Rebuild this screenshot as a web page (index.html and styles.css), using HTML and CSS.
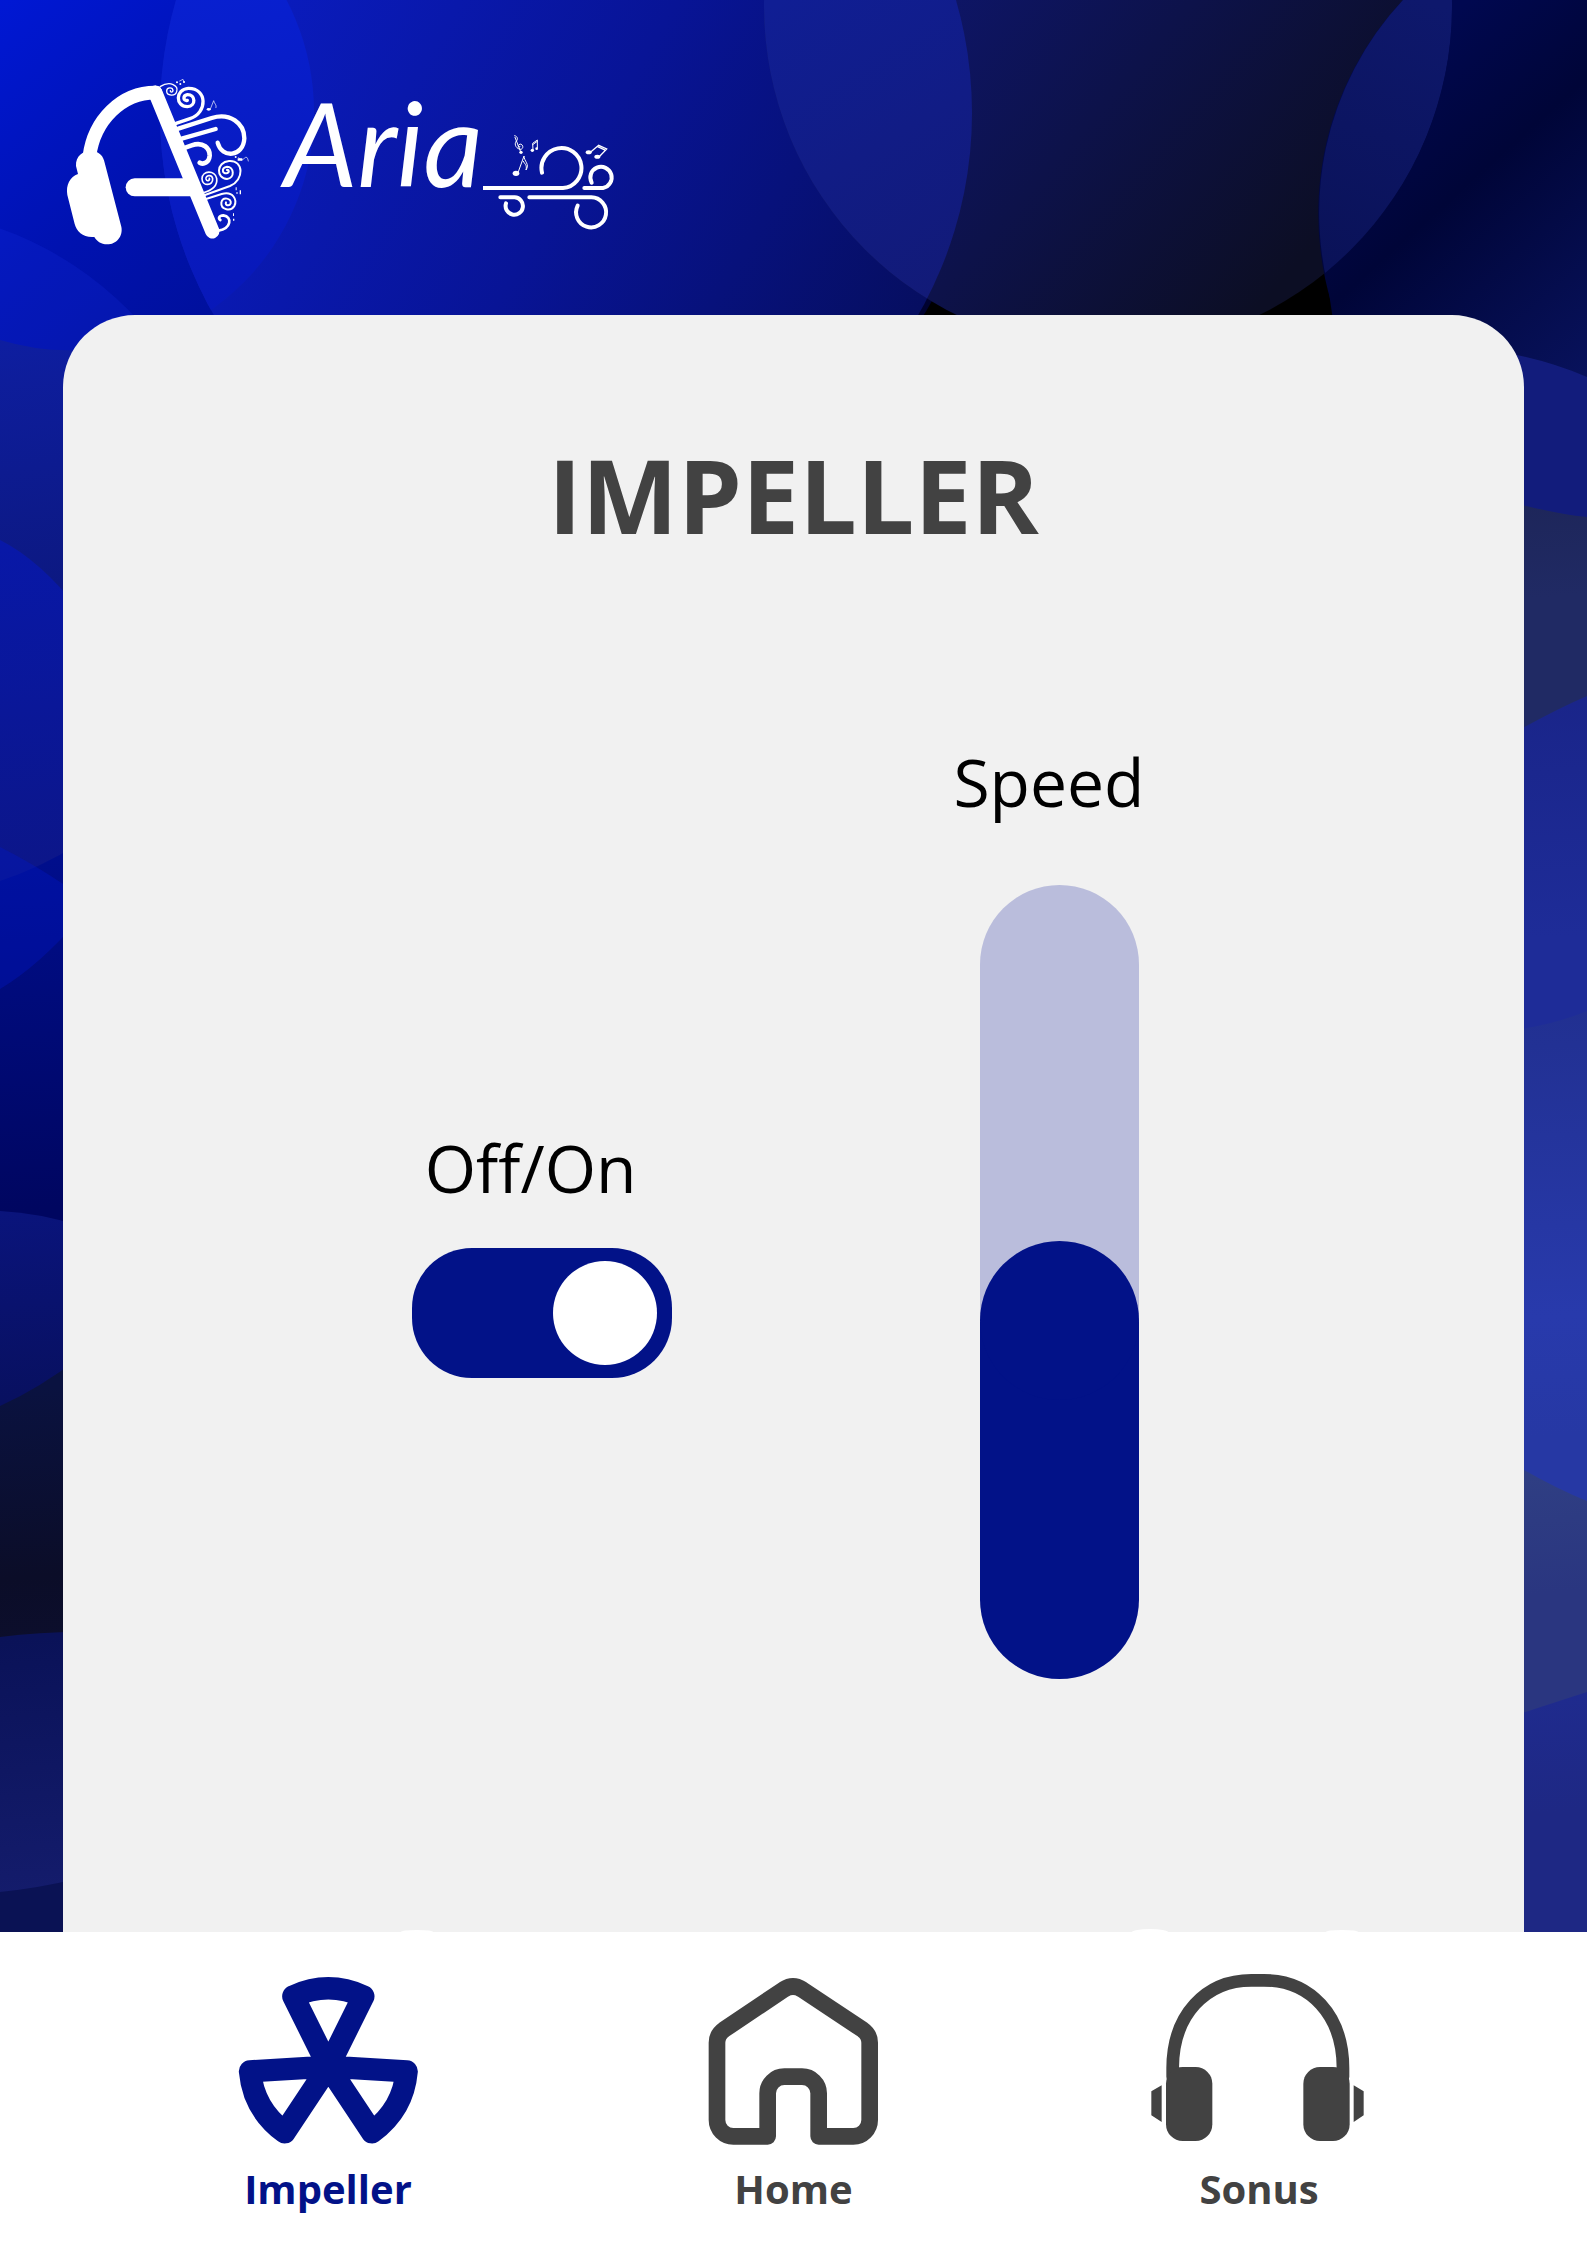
FILE: index.html
```html
<!DOCTYPE html>
<html lang="en">
<head>
<meta charset="utf-8">
<meta name="viewport" content="width=device-width, initial-scale=1">
<title>Aria – Impeller</title>
<link rel="stylesheet" href="styles.css">
</head>
<body>
<div class="page">
  <svg class="backdrop" viewBox="0 0 1587 2245" preserveAspectRatio="xMidYMid slice" aria-hidden="true">
    <defs>
      <linearGradient id="gc" gradientUnits="userSpaceOnUse" x1="0" y1="0" x2="240" y2="300"><stop offset="0" stop-color="#0018d4"/><stop offset=".6" stop-color="#0012b0"/><stop offset="1" stop-color="#00109c"/></linearGradient>
      <linearGradient id="gb" gradientUnits="userSpaceOnUse" x1="220" y1="40" x2="860" y2="420"><stop offset="0" stop-color="#0a1cc0"/><stop offset=".5" stop-color="#081496"/><stop offset="1" stop-color="#060e60"/></linearGradient>
      <linearGradient id="ga" gradientUnits="userSpaceOnUse" x1="860" y1="0" x2="1240" y2="330"><stop offset="0" stop-color="#0e1670"/><stop offset="1" stop-color="#0c0e24"/></linearGradient>
      <linearGradient id="gab" gradientUnits="userSpaceOnUse" x1="780" y1="0" x2="960" y2="300"><stop offset="0" stop-color="#101e94"/><stop offset="1" stop-color="#121a76"/></linearGradient>
      <linearGradient id="gbc" gradientUnits="userSpaceOnUse" x1="180" y1="0" x2="260" y2="310"><stop offset="0" stop-color="#0820d0"/><stop offset="1" stop-color="#0818b8"/></linearGradient>
      <linearGradient id="gr" gradientUnits="userSpaceOnUse" x1="1400" y1="60" x2="1640" y2="330"><stop offset="0" stop-color="#000850"/><stop offset=".38" stop-color="#000538"/><stop offset="1" stop-color="#08125c"/></linearGradient>
      <linearGradient id="gar" gradientUnits="userSpaceOnUse" x1="1420" y1="0" x2="1340" y2="270"><stop offset="0" stop-color="#0e186c"/><stop offset="1" stop-color="#0a1258"/></linearGradient>
      <linearGradient id="l1" gradientUnits="userSpaceOnUse" x1="0" y1="340" x2="40" y2="600"><stop offset="0" stop-color="#0e1ea0"/><stop offset="1" stop-color="#0c1880"/></linearGradient>
      <linearGradient id="l2" gradientUnits="userSpaceOnUse" x1="0" y1="540" x2="40" y2="880"><stop offset="0" stop-color="#0818a8"/><stop offset="1" stop-color="#0c1688"/></linearGradient>
      <linearGradient id="l3" gradientUnits="userSpaceOnUse" x1="0" y1="860" x2="30" y2="1210"><stop offset="0" stop-color="#000e8c"/><stop offset="1" stop-color="#000660"/></linearGradient>
      <linearGradient id="l4" gradientUnits="userSpaceOnUse" x1="0" y1="1210" x2="20" y2="1400"><stop offset="0" stop-color="#0a147c"/><stop offset="1" stop-color="#081060"/></linearGradient>
      <linearGradient id="l5" gradientUnits="userSpaceOnUse" x1="0" y1="1390" x2="20" y2="1640"><stop offset="0" stop-color="#0a1240"/><stop offset=".75" stop-color="#0b0d28"/><stop offset="1" stop-color="#0c0e2c"/></linearGradient>
      <linearGradient id="l6" gradientUnits="userSpaceOnUse" x1="0" y1="1640" x2="20" y2="1900"><stop offset="0" stop-color="#0a1258"/><stop offset="1" stop-color="#141c6c"/></linearGradient>
      <linearGradient id="r1" gradientUnits="userSpaceOnUse" x1="0" y1="360" x2="20" y2="520"><stop offset="0" stop-color="#101868"/><stop offset="1" stop-color="#121c7c"/></linearGradient>
      <linearGradient id="r2" gradientUnits="userSpaceOnUse" x1="0" y1="500" x2="20" y2="730"><stop offset="0" stop-color="#1a204c"/><stop offset="1" stop-color="#202a64"/></linearGradient>
      <linearGradient id="r3" gradientUnits="userSpaceOnUse" x1="0" y1="700" x2="20" y2="1030"><stop offset="0" stop-color="#182284"/><stop offset="1" stop-color="#1e2c98"/></linearGradient>
      <linearGradient id="r4" gradientUnits="userSpaceOnUse" x1="0" y1="1020" x2="20" y2="1500"><stop offset="0" stop-color="#202e8c"/><stop offset=".75" stop-color="#283aac"/><stop offset="1" stop-color="#2638a4"/></linearGradient>
      <linearGradient id="r5" gradientUnits="userSpaceOnUse" x1="0" y1="1480" x2="20" y2="1720"><stop offset="0" stop-color="#30409c"/><stop offset=".4" stop-color="#304084"/><stop offset="1" stop-color="#2a3680"/></linearGradient>
      <linearGradient id="r6" gradientUnits="userSpaceOnUse" x1="0" y1="1700" x2="20" y2="1940"><stop offset="0" stop-color="#202e98"/><stop offset="1" stop-color="#1e2884"/></linearGradient>
      <clipPath id="cb"><circle cx="566" cy="113" r="406"/></clipPath>
      <clipPath id="ca"><circle cx="1108" cy="6" r="344"/></clipPath>
      <clipPath id="lefthalf"><rect width="500" height="400"/></clipPath>
    </defs>
    <rect width="1587" height="2245" fill="#000"/>
    <circle cx="540" cy="80" r="450" fill="#000230"/>
    <circle cx="566" cy="113" r="406" fill="url(#gb)"/>
    <circle cx="1108" cy="6" r="344" fill="url(#ga)"/>
    <circle cx="1108" cy="6" r="344" fill="url(#gab)" clip-path="url(#cb)"/>
    <path d="M1587 0H1403A312 312 0 0 0 1380 400H1587Z" fill="url(#gr)"/>
    <path d="M1452 0H1403A312 312 0 0 0 1336 314L1452 200Z" fill="url(#gar)" clip-path="url(#ca)"/>
    <path d="M1452 0A344 344 0 0 1 1326 273L1336 340H1587V0Z" fill="url(#gr)"/>
    <path d="M0 0H242V400H0Z" fill="url(#gc)"/>
    <circle cx="566" cy="113" r="406" fill="url(#gb)" clip-path="url(#lefthalf)"/>
    <circle cx="72" cy="112" r="242" fill="url(#gbc)" clip-path="url(#cb)"/>
    <circle cx="-117" cy="554" r="346" fill="#2040ff" opacity=".14"/>
    <path d="M0 340Q40 352 80 350V1000H0Z" fill="url(#l1)"/>
    <path d="M0 540Q40 560 80 611V1000H0Z" fill="url(#l2)"/>
    <path d="M0 881Q40 868 80 843V1300H0Z" fill="url(#l3)"/>
    <path d="M0 847Q32 863 63 884L80 896V918Q40 965 0 989Z" fill="#0018c8" opacity=".35"/>
    <path d="M0 1211Q40 1213 80 1226V1500H0Z" fill="url(#l4)"/>
    <path d="M0 1406Q40 1388 80 1357V1700H0Z" fill="url(#l5)"/>
    <path d="M0 1637Q40 1632 80 1632V2000H0Z" fill="url(#l6)"/>
    <path d="M0 1892Q40 1888 80 1878V2245H0Z" fill="#0a1254"/>
    <path d="M1507 353Q1550 361 1587 377V2245H1507Z" fill="url(#r1)"/>
    <path d="M1507 501Q1555 514 1587 517V2245H1507Z" fill="url(#r2)"/>
    <path d="M1507 737Q1550 712 1587 696V2245H1507Z" fill="url(#r3)"/>
    <path d="M1507 1031Q1550 1026 1587 1011V2245H1507Z" fill="url(#r4)"/>
    <path d="M1507 1460Q1550 1486 1587 1501V2245H1507Z" fill="url(#r5)"/>
    <path d="M1507 1718Q1550 1704 1587 1692V2245H1507Z" fill="url(#r6)"/>
  </svg>

  <header class="header">
    <a class="brand" href="#home" aria-label="Aria">
      <svg class="mark" viewBox="0 0 660 600" aria-hidden="true">
        <path class="solid" d="M78 318C76 285 105 270 130 274C150 277 160 290 164 308L214 500C220 530 198 553 172 553C152 553 140 543 133 531C100 534 80 515 74 492L52 405C47 375 60 350 84 342Z"/>
        <path stroke-width="41" stroke-linejoin="round" d="M118 290C132 180 215 98 316 98"/>
        <path stroke-width="43" d="M316 98L487 514"/>
        <circle class="solid" cx="316" cy="98" r="21"/>
        <path stroke-width="54" d="M254 382H425"/>
        <g stroke-width="5">
          <path stroke-width="4" d="M330 80C362 60 386 78 380 95C376 110 350 108 350 93C350 81 368 80 369 92C368 98 360 97 361 92"/>
          <path stroke-width="10" d="M378 190L420 176C474 158 472 84 415 85C375 88 376 140 412 140C440 138 436 103 412 104C397 107 400 124 412 121"/>
          <path stroke-width="13" d="M385 206L485 174C540 157 583 190 583 235C580 292 515 296 503 248"/>
          <path stroke-width="13" d="M395 236L497 207"/>
          <path stroke-width="14" d="M408 262L425 256C460 244 480 265 479 287C477 312 455 313 449 308"/>
          <path d="M458 399C490 390 503 375 500 355C495 330 457 330 456 356C457 380 490 378 488 356C486 342 466 345 468 357C471 366 480 362 478 355"/>
          <path stroke-width="6" d="M465 405L540 378C583 360 582 300 537 303C498 306 498 356 531 357C556 354 552 320 531 320C513 323 516 344 532 339C540 335 535 328 531 330"/>
          <path stroke-width="6" d="M468 417L515 402C550 392 562 420 553 438C543 455 512 450 514 428C518 408 546 415 542 430C538 440 524 436 528 427"/>
          <path stroke-width="8" d="M505 512C544 506 548 470 520 466C507 466 504 476 511 480"/>
          <path stroke-width="2" d="M481 147L491 122C493 132 501 134 498 143M566 293Q574 305 583 295T595 303M389 63L399 58L402 66"/>
        </g>
        <g class="solid"><ellipse cx="476" cy="148" rx="6" ry="4"/><circle cx="381" cy="67" r="3"/><circle cx="391" cy="72" r="3"/><circle cx="402" cy="66" r="3"/><circle cx="557" cy="291" r="3"/><path d="M563 295h14v7h-14zM557 382h3v9h-3zM569 391h4v12h-4zM559 397h4v4h-4zM549 460h3v8h-3zM549 476h4v6h-4z"/></g>
      </svg>
      <span class="wordmark">Aria</span>
      <svg class="swirls" viewBox="640 0 420 600" aria-hidden="true">
        <g stroke-width="12">
          <path d="M642 384H880A60 60 0 1 0 817 338"/>
          <path d="M944 384H1000A32 32 0 1 0 966 368"/>
          <path d="M692 412H735A26 26 0 1 1 709 430"/>
          <path d="M779 412H965A45 45 0 1 1 924 437"/>
        </g>
        <g stroke-width="3">
          <path d="M745 338L763 288C763 304 781 312 769 330C773 314 764 312 761 304"/>
          <path d="M790 270L789 250L803 240V264M789 254L803 244"/>
          <path stroke-width="4" d="M963 276L987 256L1011 267L990 289M984 260L1008 271"/>
          <path d="M735 227C746 229 744 240 740 243C731 254 742 268 754 268C765 264 757 247 748 254C741 260 751 263 752 259M736 232L754 278"/>
        </g>
        <g class="solid"><ellipse cx="739" cy="340" rx="10" ry="8"/><ellipse cx="957" cy="277" rx="9" ry="6"/><ellipse cx="983" cy="290" rx="9" ry="6"/><circle cx="788" cy="271" r="5"/><circle cx="801" cy="266" r="4"/><circle cx="754" cy="277" r="5"/></g>
      </svg>
    </a>
  </header>

  <main class="card">
    <h1 class="title">IMPELLER</h1>
    <div class="controls">
      <div class="control control-power">
        <label class="label" for="power">Off/On</label>
        <input class="toggle" id="power" type="checkbox" role="switch" checked>
      </div>
      <div class="control">
        <label class="label" for="speed">Speed</label>
        <input class="slider" id="speed" type="range" min="0" max="100" value="44">
      </div>
    </div>
  </main>

  <nav class="tabs" aria-label="Main">
    <svg class="bumps" viewBox="0 0 1587 8" preserveAspectRatio="none" aria-hidden="true">
      <ellipse cx="417" cy="8" rx="16" ry="2"/><ellipse cx="1150" cy="8" rx="18" ry="3"/><ellipse cx="1342" cy="8" rx="16" ry="2"/>
    </svg>
    <a class="tab tab-active" href="#impeller" aria-current="page">
      <svg class="icon" viewBox="-6 156 660 540" aria-hidden="true">
        <path stroke-width="67" d="M325 440L220 229Q325 181 430 229ZM325 440L90 454Q100 568 194 637ZM325 440L560 454Q550 568 456 637Z"/>
      </svg>
      <span>Impeller</span>
    </a>
    <a class="tab" href="#home">
      <svg class="icon" viewBox="11 156 660 540" aria-hidden="true">
        <path stroke-width="50" d="M265 649H162A49 49 0 0 1 113 600V368Q113 344 134 329L314 208Q341 191 368 208L550 329Q571 344 571 368V600A49 49 0 0 1 522 649H418V520A50 50 0 0 0 368 470H315A50 50 0 0 0 265 520Z"/>
      </svg>
      <span>Home</span>
    </a>
    <a class="tab" href="#sonus">
      <svg class="icon" viewBox="55 156 660 540" aria-hidden="true">
        <path stroke-width="38" d="M126 470V445C126 285 225 181 362 181H400C538 181 637 285 637 445V470"/>
        <g class="solid"><rect x="106" y="441" width="139" height="222" rx="50"/><rect x="518" y="441" width="139" height="222" rx="50"/><path d="M62 514L93 496V606L62 586ZM699 514L669 496V606L699 586Z"/></g>
      </svg>
      <span>Sonus</span>
    </a>
  </nav>
</div>
</body>
</html>
```
FILE: styles.css
```css
:root {
  --navy: #021288;
  --track: #babddc;
  --panel: #f1f1f1;
  --ink: #424242;
}

* {
  box-sizing: border-box;
}

body {
  margin: 0;
  font-family: "Open Sans", "Noto Sans", sans-serif;
  color: #000;
}

.page {
  position: relative;
  z-index: 0;
  display: flex;
  flex-direction: column;
  min-height: 100vh;
  overflow: hidden;
}

.backdrop {
  position: absolute;
  inset: 0;
  z-index: -1;
  width: 100%;
  height: 100%;
}

.header {
  padding: 60px 50px 55px;
}

.brand {
  display: inline-flex;
  align-items: flex-start;
  color: #fff;
  text-decoration: none;
  vertical-align: top;
}

.mark,
.swirls,
.icon {
  display: block;
  flex: none;
  fill: none;
  stroke: currentColor;
  stroke-linecap: round;
}

.mark {
  width: 220px;
  height: 200px;
}

.swirls {
  width: 140px;
  height: 200px;
}

.solid {
  fill: currentColor;
  stroke: none;
}

.wordmark {
  padding-left: 14px;
  font: italic 116px/166px Lato, sans-serif;
}

.card {
  flex: 1;
  margin: 0 4%;
  padding: 120px 0 248px;
  border-radius: 72px 72px 0 0;
  background: var(--panel);
}

.title {
  margin: 0 0 186px;
  font-size: 102px;
  font-weight: 700;
  line-height: 120px;
  text-align: center;
  color: var(--ink);
}

.controls {
  display: grid;
  grid-template-columns: 1fr 1fr;
  align-items: center;
  padding: 0 14% 0 15%;
}

.control {
  display: flex;
  flex-direction: column;
  align-items: center;
  gap: 64px;
}

.control-power {
  gap: 41px;
  padding-top: 84px;
}

.label {
  padding-right: 22px;
  font-size: 66px;
  line-height: 80px;
}

.toggle {
  appearance: none;
  display: flex;
  justify-content: flex-start;
  align-items: center;
  width: 260px;
  height: 130px;
  margin: 0;
  padding: 0 15px;
  border-radius: 60px;
  background: var(--track);
  cursor: pointer;
}

.toggle::before {
  content: "";
  width: 104px;
  height: 104px;
  border-radius: 50%;
  background: #fff;
}

.toggle:checked {
  justify-content: flex-end;
  background: var(--navy);
}

.slider {
  appearance: none;
  writing-mode: vertical-lr;
  direction: rtl;
  width: 159px;
  height: 794px;
  margin: 0;
  border-radius: 80px;
  background: linear-gradient(to top, var(--navy) 45%, var(--track) 45%);
  overflow: hidden;
  cursor: pointer;
}

.slider::-webkit-slider-thumb {
  appearance: none;
  width: 159px;
  height: 159px;
  border: 0;
  border-radius: 50%;
  background: var(--navy);
}

.slider::-moz-range-thumb {
  width: 159px;
  height: 159px;
  border: 0;
  border-radius: 50%;
  background: var(--navy);
}

.tabs {
  position: relative;
  display: grid;
  grid-template-columns: repeat(3, 1fr);
  padding: 40px 6% 32px;
  background: #fff;
}

.bumps {
  position: absolute;
  left: 0;
  bottom: 100%;
  width: 100%;
  height: 8px;
  fill: #fff;
}

.tab {
  display: flex;
  flex-direction: column;
  align-items: center;
  gap: 13px;
  font-size: 40px;
  font-weight: 700;
  line-height: 48px;
  color: var(--ink);
  text-decoration: none;
}

.tab-active {
  color: var(--navy);
}

.icon {
  width: 220px;
  height: 180px;
  stroke-linejoin: round;
}
```
